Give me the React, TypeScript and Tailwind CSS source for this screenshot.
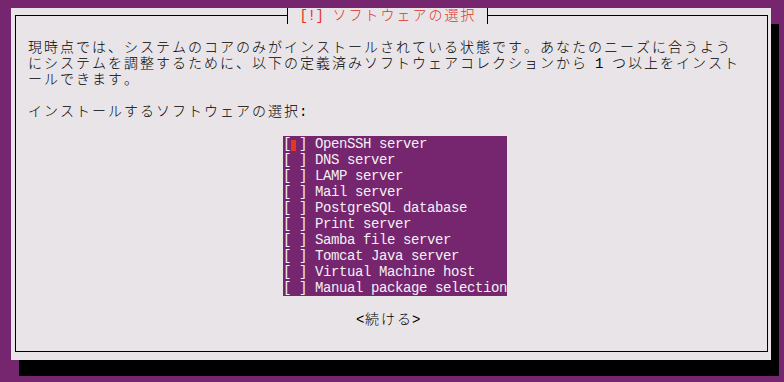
import React from "react";

// terminal-like cell rendering: half-width = 8px, full-width = 16px
const isWide = (c: string) => {
  const cp = c.codePointAt(0) ?? 0;
  return (
    (cp >= 0x1100 && cp <= 0x115f) ||
    (cp >= 0x2e80 && cp <= 0xa4cf) ||
    (cp >= 0xac00 && cp <= 0xd7a3) ||
    (cp >= 0xf900 && cp <= 0xfaff) ||
    (cp >= 0xfe30 && cp <= 0xfe4f) ||
    (cp >= 0xff00 && cp <= 0xff60) ||
    (cp >= 0xffe0 && cp <= 0xffe6)
  );
};

function Cells({ text }: { text: string }) {
  return (
    <>
      {Array.from(text).map((c, i) => (
        <span
          key={i}
          className={
            isWide(c)
              ? "inline-block w-[16px] text-center text-[14px] font-light"
              : "inline-block w-[8px] text-center text-[14px]"
          }
        >
          {c === " " ? "\u00a0" : c}
        </span>
      ))}
    </>
  );
}

const items = [
  "OpenSSH server",
  "DNS server",
  "LAMP server",
  "Mail server",
  "PostgreSQL database",
  "Print server",
  "Samba file server",
  "Tomcat Java server",
  "Virtual Machine host",
  "Manual package selection",
];

export default function App() {
  return (
    <div
      className="w-[784px] h-[382px] bg-[#75266f] pl-[11px] pt-[8px] overflow-hidden"
      style={{ fontFamily: '"Liberation Mono", "Noto Sans CJK JP", monospace' }}
    >
      <div className="relative w-[760px] h-[352px] bg-[#e8e4e8] pl-[4px] pt-[7px] shadow-[8px_16px_0_0_#000]">
        {/* frame */}
        <div className="w-[753px] h-[337px] border border-black pl-[11px] pt-[24px] text-black leading-[16px]">
          <div className="h-[16px] whitespace-nowrap">
            <Cells text="現時点では、システムのコアのみがインストールされている状態です。あなたのニーズに合うよう" />
          </div>
          <div className="h-[16px] whitespace-nowrap">
            <Cells text="にシステムを調整するために、以下の定義済みソフトウェアコレクションから 1 つ以上をインスト" />
          </div>
          <div className="h-[16px] whitespace-nowrap">
            <Cells text="ールできます。" />
          </div>
          <div className="h-[16px]" />
          <div className="h-[16px] whitespace-nowrap">
            <Cells text="インストールするソフトウェアの選択:" />
          </div>
          <div className="h-[16px]" />

          {/* checklist */}
          <div className="ml-[256px] w-[224px] bg-[#75266f] text-[#f4f0f4]">
            {items.map((it, i) => (
              <div key={it} className="h-[16px] whitespace-nowrap">
                <span className="inline-block w-[8px] text-center text-[14px]">[</span>
                <span className="relative inline-block w-[8px] text-[14px]">
                  {"\u00a0"}
                  {i === 0 && (
                    <span className="absolute left-0 top-[4px] w-[5px] h-[11px] bg-[#e0391f]" />
                  )}
                </span>
                <Cells text={"] " + it} />
              </div>
            ))}
          </div>

          <div className="h-[16px]" />
          <div className="h-[16px] ml-[329px] whitespace-nowrap">
            <Cells text="<続ける>" />
          </div>
        </div>

        {/* title */}
        <div className="absolute left-[276px] top-0 w-[201px] h-[16px] border-l border-r border-black bg-[#e8e4e8] flex justify-center leading-[16px] text-[#e0321f] whitespace-nowrap">
          <Cells text=" [!] ソフトウェアの選択 " />
        </div>
      </div>
    </div>
  );
}
